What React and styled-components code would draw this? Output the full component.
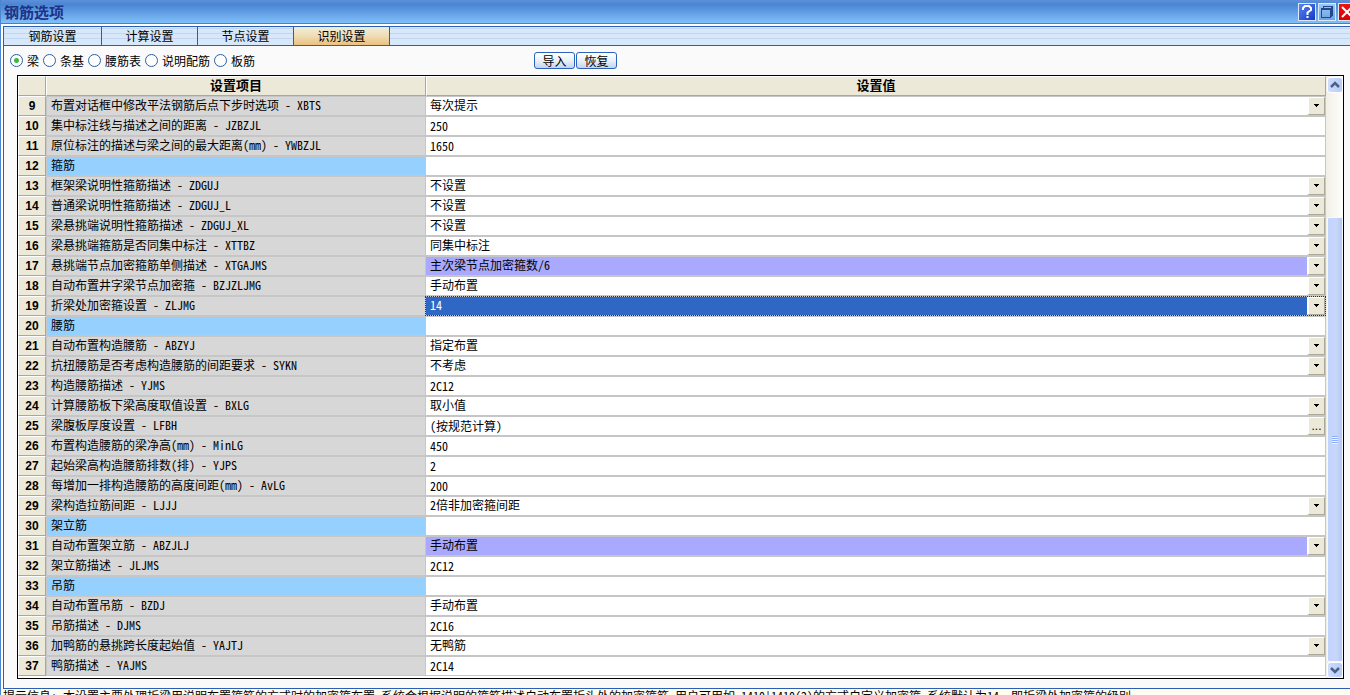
import React, { useState } from 'react';
import styled, { createGlobalStyle, css } from 'styled-components';

const GlobalStyle = createGlobalStyle`
  * { box-sizing: border-box; }
  html, body { margin: 0; overflow: hidden; }
  body, input, select, button {
    font-family: 'Noto Sans CJK SC', 'Liberation Sans', sans-serif;
    font-size: 12px;
    font-feature-settings: 'hwid';
    color: #000;
  }
`;

const Window = styled.main`
  display: flex;
  flex-direction: column;
  height: 100vh;
  overflow: hidden;
  border-left: 1px solid #4a86d2;
  background: #fff;
`;

const TitleBar = styled.header`
  display: flex;
  flex: none;
  justify-content: space-between;
  height: 24px;
  overflow: hidden;
  border-bottom: 1px solid #3f83d0;
  background: linear-gradient(#5e90d8, #4a86d4 20%, #6aa6e8 65%, #7fc0fa);
`;

const Title = styled.h1`
  margin: 0;
  padding-left: 3px;
  font-size: 15px;
  line-height: 24px;
  color: #1e3288;
`;

const TitleButtons = styled.div`
  display: flex;
  gap: 2px;
  margin: 3px -6px 0 0;
`;

const tones = {
  help: 'linear-gradient(135deg, #5c86f0, #1238c8)',
  restore: 'linear-gradient(#9cc8f4, #6aa4e2)',
  close: 'linear-gradient(#f01010, #d80000)',
};

const TitleButton = styled.button`
  width: 18px;
  height: 18px;
  padding: 0;
  border: 1px solid #dce8f8;
  background: ${(p) => tones[p.$tone]};

  svg { display: block; }
`;

const TabBar = styled.nav`
  display: flex;
  flex: none;
  height: 20px;
  margin: 2px 0 0 2px;
  border: solid #2a5fb4;
  border-width: 1px 0 1px 1px;
  background: linear-gradient(#d8e8fb 1px, #c2d6ee 1px 2px, #d8e8fb 2px 6px, #c2d6ee 6px 7px, #d8e8fb 7px 11px, #c2d6ee 11px 12px, #d8e8fb 12px);
`;

const Tab = styled.button`
  width: 96px;
  padding: 0;
  border: 0;
  border-right: 1px solid #2a5fb4;
  background: transparent;
  line-height: 18px;

  &:first-child { width: 98px; }

  ${(p) => p.$active && css`
    background: linear-gradient(#eeeedb, #f0dcb4 50%, #eac080);
  `}
`;

const Panel = styled.section`
  flex: none;
  margin-left: 2px;
  padding: 0 6px 9px 13px;
  border: solid #2a5fb4;
  border-width: 0 0 1px 1px;
  background: #fafafa;
`;

const Toolbar = styled.div`
  display: flex;
  align-items: center;
  height: 29px;
  margin-left: -7px;
`;

const RadioGroup = styled.div`
  display: flex;
  flex: 0 0 524px;
  gap: 4px;
`;

const RadioLabel = styled.label`
  display: flex;
  align-items: center;
  gap: 4px;
  line-height: 16px;
`;

const Radio = styled.input`
  appearance: none;
  width: 13px;
  height: 13px;
  margin: 0;
  border: 1px solid #2a5fa8;
  border-radius: 50%;
  background: #fff;

  &:checked {
    background: radial-gradient(circle, #3cb83c 2px, #fff 3px);
  }
`;

const Command = styled.button`
  width: 41px;
  height: 17px;
  margin-right: 1px;
  padding: 0;
  border: 1px solid #2a62bc;
  border-radius: 3px;
  background: linear-gradient(#fff, #eaf1fa 50%, #c4d4ee);
  line-height: 14px;
`;

const GridFrame = styled.div`
  display: flex;
  border: 1px solid #000;
  background: #fff;
`;

const Grid = styled.table`
  flex: 1;
  min-width: 0;
  margin-bottom: 2px;
  table-layout: fixed;
  border-collapse: separate;
  border-spacing: 0;
  line-height: 18px;

  tr { height: 20px; }
  td, th { height: 20px; padding: 0; vertical-align: top; }
`;

const HeadCell = styled.th`
  border: 1px solid;
  border-color: #fff #aca899 #aca899 #fff;
  background: #ece9d8;
  font-size: 13px;
  line-height: 16px;
`;

const NumberCell = styled.th`
  border: 1px solid;
  border-color: #fff #aca899 #aca899 #fff;
  background: #ece9d8;
  font-family: 'Liberation Sans', sans-serif;
  font-size: 12px;
`;

const NameCell = styled.td`
  border: 1px solid #c6c6c6;
  background: ${(p) => (p.$section ? '#96d0ff' : '#d7d7d7')};
  white-space: nowrap;
  line-height: 16px;

  label { display: block; padding-left: 4px; }
`;

const fills = {
  plain: ['#fff', '#000'],
  changed: ['#a9a9ff', '#000'],
  selected: ['#2f68c4', '#fff'],
};

const ValueCell = styled.td`
  border: solid #c6c6c6;
  border-width: 1px 1px 1px 0;
  background: ${(p) => fills[p.$tone][0]};
`;

const Editor = styled.div`
  position: relative;
  display: flex;
  height: 18px;
  outline: ${(p) => (p.$focused ? '1px dotted #333' : 'none')};
`;

const field = css`
  flex: 1;
  min-width: 0;
  height: 18px;
  margin: 0;
  padding: 0 0 2px 4px;
  border: 0;
  outline: 0;
  border-radius: 0;
  background: transparent;
  line-height: 16px;
`;

const TextField = styled.input`${field}`;

const Choice = styled.select`
  ${field}
  appearance: none;
  color: ${(p) => fills[p.$tone][1]};
`;

const raised = css`
  width: 18px;
  height: 18px;
  border: 1px solid;
  border-color: #fff #aca899 #aca899 #fff;
  border-left-width: 2px;
  background: #ece9d8;
`;

const DropMark = styled.span`
  ${raised}
  position: absolute;
  top: 0;
  right: 0;
  pointer-events: none;

  svg { display: block; margin: 6px 0 0 5px; }
`;

const MoreButton = styled.button`
  ${raised}
  padding: 0;
  font-family: 'Liberation Sans', sans-serif;
  line-height: 16px;
`;

const ScrollBar = styled.div`
  display: flex;
  flex: 0 0 17px;
  flex-direction: column;
  padding: 1px 0 0 1px;
  background: linear-gradient(90deg, #f1efe6, #fefefb);
`;

const ScrollButton = styled.button`
  flex: 0 0 16px;
  padding: 0;
  border: 1px solid #fff;
  border-radius: 3px;
  background: linear-gradient(90deg, #cfdcfe, #b6ccf8);

  svg { display: block; margin: auto; }
`;

const Track = styled.div`flex: 124;`;

const Thumb = styled.div`
  display: flex;
  flex: 443;
  align-items: center;
  justify-content: center;
  border: 1px solid #f4f8ff;
  border-radius: 2px;
  background: linear-gradient(90deg, #c2d4fc, #c8d6fb 60%, #b2c8f6);
`;

const Hint = styled.footer`
  flex: 1 0 20px;
  padding-left: 2px;
  background: #fffbf0;
  line-height: 14px;
  white-space: pre;
`;

const TABS = ['钢筋设置', '计算设置', '节点设置', '识别设置'];
const MEMBERS = ['梁', '条基', '腰筋表', '说明配筋', '板筋'];

const ROWS = [
  { name: '布置对话框中修改平法钢筋后点下步时选项 - XBTS', value: '每次提示', kind: 'choice' },
  { name: '集中标注线与描述之间的距离 - JZBZJL', value: '250' },
  { name: '原位标注的描述与梁之间的最大距离(mm) - YWBZJL', value: '1650' },
  { name: '箍筋', kind: 'section' },
  { name: '框架梁说明性箍筋描述 - ZDGUJ', value: '不设置', kind: 'choice' },
  { name: '普通梁说明性箍筋描述 - ZDGUJ_L', value: '不设置', kind: 'choice' },
  { name: '梁悬挑端说明性箍筋描述 - ZDGUJ_XL', value: '不设置', kind: 'choice' },
  { name: '梁悬挑端箍筋是否同集中标注 - XTTBZ', value: '同集中标注', kind: 'choice' },
  { name: '悬挑端节点加密箍筋单侧描述 - XTGAJMS', value: '主次梁节点加密箍数/6', kind: 'choice', tone: 'changed' },
  { name: '自动布置井字梁节点加密箍 - BZJZLJMG', value: '手动布置', kind: 'choice' },
  { name: '折梁处加密箍设置 - ZLJMG', value: '14', kind: 'choice', tone: 'selected' },
  { name: '腰筋', kind: 'section' },
  { name: '自动布置构造腰筋 - ABZYJ', value: '指定布置', kind: 'choice' },
  { name: '抗扭腰筋是否考虑构造腰筋的间距要求 - SYKN', value: '不考虑', kind: 'choice' },
  { name: '构造腰筋描述 - YJMS', value: '2C12' },
  { name: '计算腰筋板下梁高度取值设置 - BXLG', value: '取小值', kind: 'choice' },
  { name: '梁腹板厚度设置 - LFBH', value: '(按规范计算)', kind: 'more' },
  { name: '布置构造腰筋的梁净高(mm) - MinLG', value: '450' },
  { name: '起始梁高构造腰筋排数(排) - YJPS', value: '2' },
  { name: '每增加一排构造腰筋的高度间距(mm) - AvLG', value: '200' },
  { name: '梁构造拉筋间距 - LJJJ', value: '2倍非加密箍间距', kind: 'choice' },
  { name: '架立筋', kind: 'section' },
  { name: '自动布置架立筋 - ABZJLJ', value: '手动布置', kind: 'choice', tone: 'changed' },
  { name: '架立筋描述 - JLJMS', value: '2C12' },
  { name: '吊筋', kind: 'section' },
  { name: '自动布置吊筋 - BZDJ', value: '手动布置', kind: 'choice' },
  { name: '吊筋描述 - DJMS', value: '2C16' },
  { name: '加鸭筋的悬挑跨长度起始值 - YAJTJ', value: '无鸭筋', kind: 'choice' },
  { name: '鸭筋描述 - YAJMS', value: '2C14' },
];

function Chevron({ up }) {
  return (
    <svg width="10" height="8" viewBox="0 0 10 8" fill="none" stroke="#4d6185" strokeWidth="2.500">
      <path d={up ? 'M1 6 L5 2 L9 6' : 'M1 2 L5 6 L9 2'} />
    </svg>
  );
}

function ValueEditor({ id, row }) {
  const tone = row.tone || 'plain';
  if (row.kind === 'choice') {
    return (
      <Editor $focused={tone === 'selected'}>
        <Choice id={id} $tone={tone} defaultValue={row.value}>
          <option>{row.value}</option>
        </Choice>
        <DropMark>
          <svg width="5" height="3" viewBox="0 0 5 3" shapeRendering="crispEdges">
            <path d="M0 0h5v1H4v1H3v1H2V2H1V1H0z" />
          </svg>
        </DropMark>
      </Editor>
    );
  }
  return (
    <Editor>
      <TextField id={id} type="text" defaultValue={row.value} />
      {row.kind === 'more' && <MoreButton type="button">...</MoreButton>}
    </Editor>
  );
}

export default function App() {
  const [tab, setTab] = useState(3);
  return (
    <Window>
      <GlobalStyle />
      <TitleBar>
        <Title>钢筋选项</Title>
        <TitleButtons>
          <TitleButton $tone="help" aria-label="帮助">
            <svg width="16" height="16" fill="none" stroke="#fff" strokeWidth="2">
              <path d="M4 6V4L6 2H10L12 4V6L8.500 8.500V11M8.500 12V14" />
            </svg>
          </TitleButton>
          <TitleButton $tone="restore" aria-label="还原">
            <svg width="16" height="16" fill="none" stroke="#23488c" shapeRendering="crispEdges">
              <path d="M2.500 4.500H11.500V13.500H2.500ZM4.500 4.500V2.500H13.500V11.500H11.500M2.500 5.500H11.500M12.500 2.500V12.500" />
            </svg>
          </TitleButton>
          <TitleButton $tone="close" aria-label="关闭">
            <svg width="16" height="16" fill="none" stroke="#fff" strokeWidth="2">
              <path d="M3 3L13 13M13 3L3 13" />
            </svg>
          </TitleButton>
        </TitleButtons>
      </TitleBar>
      <TabBar>
        {TABS.map((name, i) => (
          <Tab key={name} type="button" $active={i === tab} onClick={() => setTab(i)}>{name}</Tab>
        ))}
      </TabBar>
      <Panel>
        <Toolbar>
          <RadioGroup>
            {MEMBERS.map((name, i) => (
              <RadioLabel key={name}>
                <Radio type="radio" name="member" defaultChecked={i === 0} />
                {name}
              </RadioLabel>
            ))}
          </RadioGroup>
          <Command type="button">导入</Command>
          <Command type="button">恢复</Command>
        </Toolbar>
        <GridFrame>
          <Grid>
            <colgroup>
              <col style={{ width: 28 }} />
              <col style={{ width: 380 }} />
              <col />
            </colgroup>
            <thead>
              <tr>
                <HeadCell />
                <HeadCell>设置项目</HeadCell>
                <HeadCell>设置值</HeadCell>
              </tr>
            </thead>
            <tbody>
              {ROWS.map((row, i) => {
                const section = row.kind === 'section';
                const id = `setting-${i + 9}`;
                return (
                  <tr key={id}>
                    <NumberCell scope="row">{i + 9}</NumberCell>
                    <NameCell $section={section}>
                      <label htmlFor={section ? undefined : id}>{row.name}</label>
                    </NameCell>
                    <ValueCell $tone={row.tone || 'plain'}>
                      {!section && <ValueEditor id={id} row={row} />}
                    </ValueCell>
                  </tr>
                );
              })}
            </tbody>
          </Grid>
          <ScrollBar>
            <ScrollButton type="button" aria-label="向上滚动"><Chevron up /></ScrollButton>
            <Track />
            <Thumb>
              <svg width="7" height="8" stroke="#8cb0f8" shapeRendering="crispEdges">
                <path d="M0 .5H6M0 2.500H6M0 4.500H6M0 6.500H6" />
                <path stroke="#eef4fe" d="M0 1.500H6M0 3.500H6M0 5.500H6M0 7.500H6" />
              </svg>
            </Thumb>
            <ScrollButton type="button" aria-label="向下滚动"><Chevron /></ScrollButton>
          </ScrollBar>
        </GridFrame>
      </Panel>
      <Hint>提示信息: 本设置主要处理折梁用说明布置箍筋的方式时的加密箍布置,系统会根据说明的箍筋描述自动布置折头处的加密箍筋,用户可用如 1410|1410(2)的方式自定义加密箍,系统默认为14, 即折梁处加密箍的级别</Hint>
    </Window>
  );
}
